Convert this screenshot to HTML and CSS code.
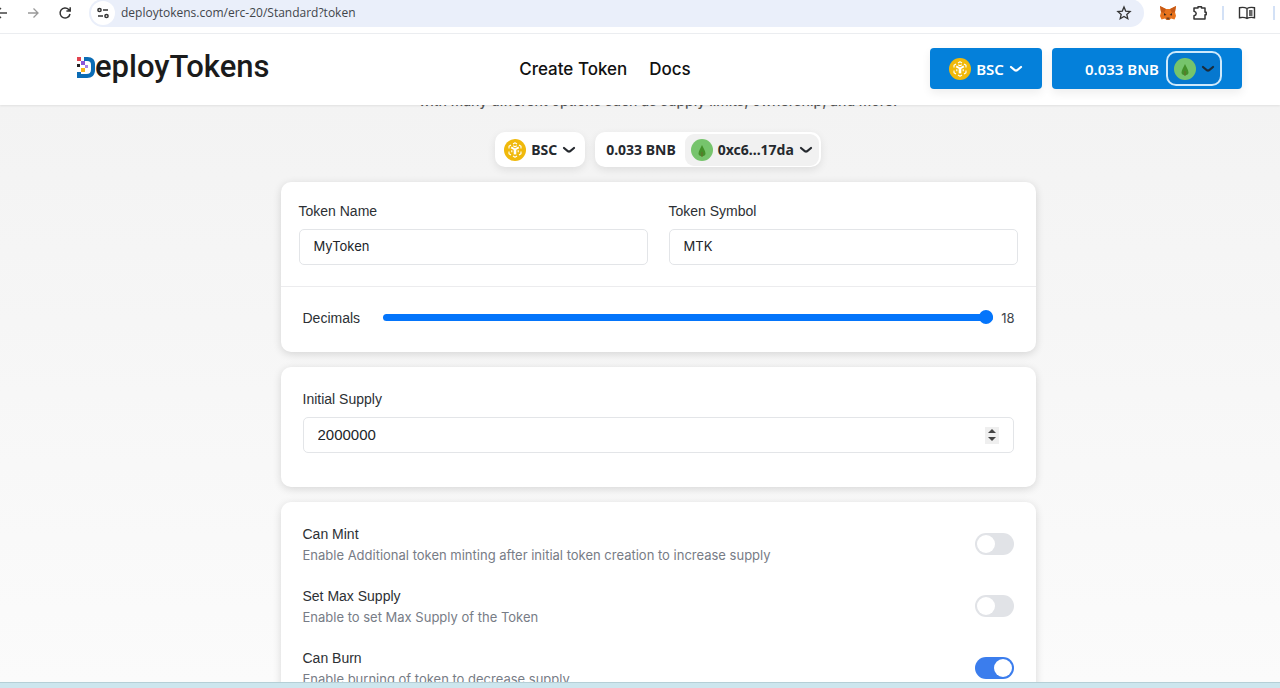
FILE: index.html
```html
<!DOCTYPE html>
<html lang="en">
<head>
<meta charset="utf-8">
<title>DeployTokens</title>
<link rel="stylesheet" href="styles.css">
</head>
<body>
<svg class="defs" aria-hidden="true">
  <symbol id="chevron" viewBox="0 0 14 8"><path d="M2 2l4 3.300q1 .6 2 0L12 2" fill="none" stroke="currentColor" stroke-width="2.200" stroke-linecap="round"/></symbol>
  <symbol id="bnb" viewBox="0 0 22 22">
    <circle cx="11" cy="11" r="11" fill="#f0b90b"/>
    <g fill="none" stroke="#fff" stroke-width="1.100" stroke-linejoin="round">
      <path d="M9 4.900 11 3.800l2 1.100M15 6l2 1.200v2.200M17 12.600v2.200L15 16M13 17.100 11 18.200 9 17.100M7 16l-2-1.200v-2.200M5 9.400V7.200L7 6"/>
      <path d="M7.200 8.300 11 10.500l3.800-2.200" stroke-width="2"/><path d="M11 10.400v5" stroke-width="2.600"/><path d="M7.800 13.200v-2M14.200 13.200v-2M9.200 6.700l1.800 1 1.800-1"/>
    </g>
  </symbol>
  <symbol id="avatar" viewBox="0 0 22 22"><circle cx="11" cy="11" r="11" fill="#76c46c"/><path d="M11 6c1 2.500 3.500 6 3.500 8.500 0 1.800-1.500 2.700-3.500 2.700s-3.500-.9-3.500-2.700C7.500 12 10 8.500 11 6z" fill="#43902a"/><path d="M11 13v5" stroke="#6a6a2c" stroke-width="1"/></symbol>
</svg>

<div class="browser">
  <button class="tool back" aria-label="Back"><svg width="16" height="16" viewBox="0 0 16 16"><path d="M14 8H3M8 3 3 8l5 5" fill="none" stroke="#444" stroke-width="1.400"/></svg></button>
  <button class="tool" aria-label="Forward"><svg width="16" height="16" viewBox="0 0 16 16"><path d="M3 8h10M8.500 3.500 13 8l-4.500 4.500" fill="none" stroke="#999" stroke-width="1.300"/></svg></button>
  <button class="tool" aria-label="Reload"><svg width="16" height="16" viewBox="0 0 16 16"><path d="M13 9a5 5 0 1 1-1.300-4.500L13 5.800M13.200 2.300v3.800H9.400" fill="none" stroke="#333" stroke-width="1.500"/></svg></button>
  <div class="address">
    <button class="site" aria-label="Site information"><svg width="14" height="14" viewBox="0 0 14 14" fill="none" stroke="#333" stroke-width="1.500"><circle cx="3.500" cy="4" r="1.600"/><path d="M7 4h5M2 10h5"/><circle cx="10.500" cy="10" r="1.600"/></svg></button>
    <input class="url" aria-label="Address" value="deploytokens.com/erc-20/Standard?token">
    <button class="tool" aria-label="Bookmark"><svg width="16" height="16" viewBox="0 0 16 16"><path d="m8 2 1.700 4.100 4.400.4-3.300 2.900 1 4.300L8 11.400l-3.800 2.300 1-4.300-3.300-2.900 4.400-.4z" fill="none" stroke="#333" stroke-width="1.300"/></svg></button>
  </div>
  <button class="tool" aria-label="MetaMask"><svg width="18" height="16" viewBox="0 0 18 16"><path d="m1 1 6 3h4l6-3-1 6 1 4-1.500 3.500L12 13.500 10.500 15h-3L6 13.500l-3.500 1L1 11l1-4z" fill="#e8731c"/><path d="m1 1 6 3-2 4-3-1zM17 1l-6 3 2 4 3-1z" fill="#c85a16"/><path d="m5 8 2.500 2L5 10.500zM13 8l-2.500 2 2.500.5z" fill="#352920"/><path d="M7.500 12.500h3v2h-3z" fill="#75401f"/></svg></button>
  <button class="tool" aria-label="Extensions"><svg width="18" height="18" viewBox="0 0 18 18"><path d="M3 4h4V2.800h3.500V4H14v4.200h1.200v2.600H14V15H3v-3.200q2.200-.6 2.200-2.300T3 7.200z" fill="none" stroke="#333" stroke-width="1.500" stroke-linejoin="round"/></svg></button>
  <span class="rule"></span>
  <button class="tool book" aria-label="Reading list"><svg width="18" height="14" viewBox="0 0 18 14"><path d="M9 2.500C7 1.300 4 1.200 1.500 1.700v10c2.500-.5 5.500-.4 7.500.8 2-1.200 5-1.300 7.500-.8v-10C14 1.200 11 1.300 9 2.500zM9 2.500v10M11 5h3.500M11 7h3.500M11 9h3.500" fill="none" stroke="#333" stroke-width="1.400"/></svg></button>
  <span class="rule last"></span>
</div>

<header class="header">
  <a class="logo" href="#" aria-label="DeployTokens"><svg class="mark" width="18" height="22" viewBox="0 0 18 22"><path d="M7 1h3.500c5 0 7.500 3 7.500 7v6c0 5-3 8-8 8H0v-6h4v2h5.500c3 0 4.500-1.500 4.500-4.500V9c0-2.500-1-4-4-4H7z" fill="#0b6cb5"/><path d="M0 1h4v4H0z" fill="#e2434f"/><path d="M4 5h4v4H4z" fill="#8b55d8"/><path d="M0 8h3v3H0z" fill="#222"/><path d="M4 12h4v4H4z" fill="#f4b41d"/><path d="M8 9h3v3H8z" fill="#a985e6"/></svg><span>eployTokens</span></a>
  <nav class="nav"><a href="#">Create Token</a><a href="#">Docs</a></nav>
  <div class="wallet">
    <button class="blue chain"><svg class="coin"><use href="#bnb"/></svg>BSC<svg class="chev"><use href="#chevron"/></svg></button>
    <button class="blue account">0.033 BNB<span class="ring"><svg class="coin"><use href="#avatar"/></svg><svg class="chev dark"><use href="#chevron"/></svg></span></button>
  </div>
</header>

<main class="main">
  <p class="intro">with many different options such as supply limits, ownership, and more.</p>
  <div class="chips">
    <button class="chip"><svg class="coin"><use href="#bnb"/></svg>BSC<svg class="chev"><use href="#chevron"/></svg></button>
    <button class="chip balance">0.033 BNB<span class="addr"><svg class="coin"><use href="#avatar"/></svg>0xc6...17da<svg class="chev"><use href="#chevron"/></svg></span></button>
  </div>
  <form class="form">
    <section class="card">
      <div class="pair">
        <div class="field"><label for="name">Token Name</label><input id="name" type="text" value="MyToken"></div>
        <div class="field"><label for="symbol">Token Symbol</label><input id="symbol" type="text" value="MTK"></div>
      </div>
      <div class="decimals"><label for="decimals">Decimals</label><input id="decimals" type="range" min="0" max="18" value="18"><output for="decimals">18</output></div>
    </section>
    <section class="card supply">
      <div class="field"><label for="supply">Initial Supply</label><div class="number"><input id="supply" type="text" inputmode="numeric" value="2000000"><button type="button" class="spin" aria-label="Change amount"><svg width="8" height="12" viewBox="0 0 8 12"><path d="m4 0 4 4H0zM0 8h8l-4 4z" fill="#444"/></svg></button></div></div>
    </section>
    <section class="card options">
      <div class="option"><div><label for="mint">Can Mint</label><p>Enable Additional token minting after initial token creation to increase supply</p></div><input id="mint" class="toggle" type="checkbox"></div>
      <div class="option"><div><label for="max">Set Max Supply</label><p>Enable to set Max Supply of the Token</p></div><input id="max" class="toggle" type="checkbox"></div>
      <div class="option"><div><label for="burn">Can Burn</label><p>Enable burning of token to decrease supply</p></div><input id="burn" class="toggle" type="checkbox" checked></div>
    </section>
  </form>
</main>
<footer class="taskbar"></footer>
</body>
</html>
```
FILE: styles.css
```css
* { box-sizing: border-box; }
body { margin: 0; height: 100vh; display: flex; flex-direction: column; overflow: hidden; font-family: Inter, sans-serif; color: #212529; background: #fff; }
button { border: 0; padding: 0; background: none; font: inherit; color: inherit; cursor: pointer; }
a { color: inherit; text-decoration: none; }
p { margin: 0; }
svg { display: block; flex: none; }
.defs { position: absolute; width: 0; height: 0; }

.browser { flex: none; height: 34px; padding-bottom: 8px; display: flex; align-items: center; border-bottom: 1px solid #eceef1; overflow: hidden; }
.tool { width: 32px; display: flex; justify-content: center; flex: none; }
.back { width: 18px; margin-left: -8px; }
.back + .tool { margin-left: 7px; }
.address { flex: 1; height: 28px; margin: 0 8px; padding: 0 4px 0 2px; display: flex; align-items: center; background: #eaeffa; border-radius: 14px; }
.site { width: 24px; height: 24px; border-radius: 50%; background: #fff; display: flex; align-items: center; justify-content: center; flex: none; }
.url { flex: 1; border: 0; background: none; outline: 0; padding: 0 6px; font: 12px "Open Sans", sans-serif; color: #41454b; }
.rule { width: 2px; height: 14px; background: #d3e1f6; margin-left: 6px; flex: none; }
.book { margin-left: 7px; }
.rule.last { margin: 0 5px 0 10px; }

.header { position: relative; z-index: 1; flex: none; height: 71px; padding: 0 38px 2px 77px; display: flex; align-items: center; justify-content: space-between; background: #fff; box-shadow: 0 1px 2px rgba(0, 0, 0, .08); }
.logo { display: flex; align-items: center; width: 203px; padding-bottom: 4px; font: 500 31px/36px Roboto, sans-serif; color: #1b1b1b; }
.nav { display: flex; gap: 22px; font-size: 17px; font-weight: 500; color: #111; }
.wallet { display: flex; gap: 10px; }
.blue { height: 41px; display: flex; align-items: center; border-radius: 4px; background: #0480da; color: #fff; font: 600 15px "Noto Sans", sans-serif; box-shadow: 0 4px 10px rgba(0, 0, 0, .07); }
.coin { width: 22px; height: 22px; }
.chev { width: 14px; height: 8px; }
.chain { width: 112px; justify-content: center; gap: 5px; }
.account { width: 190px; padding-right: 20px; justify-content: flex-end; gap: 7px; }
.ring { height: 35px; width: 56px; display: flex; align-items: center; justify-content: center; gap: 5px; border: 2px solid #cfe9fb; border-radius: 10px; background: #0678cf; }
.dark { color: #1b2b3a; }

.main { flex: 1; min-height: 0; overflow: hidden; padding-left: 36px; display: flex; flex-direction: column; align-items: center; background: linear-gradient(#f3f3f3, #fbfbfb); }
.intro { flex: none; height: 24px; line-height: 24px; margin-top: -16px; font-size: 14px; font-weight: 500; color: #555; }
.chips { flex: none; display: flex; gap: 10px; margin-top: 19px; }
.chip { height: 35px; padding: 0 9px; display: flex; align-items: center; gap: 5px; border-radius: 10px; background: #fff; font: 700 14px "Noto Sans", sans-serif; color: #25292e; box-shadow: 0 3px 8px rgba(0, 0, 0, .09); }
.balance { padding: 0 2px 0 11px; gap: 9px; }
.addr { height: 32px; padding: 0 6px; display: flex; align-items: center; gap: 5px; border-radius: 9px; background: #f1f1f1; }

.form { flex: none; width: calc(100% - 80px); max-width: 755px; margin-top: 15px; display: flex; flex-direction: column; gap: 15px; font-size: 14px; }
.card { background: #fff; border-radius: 10px; box-shadow: 0 2px 8px rgba(0, 0, 0, .14); }
.card label { font: 14px/20px "Liberation Sans", Arial, sans-serif; color: #2c3034; }
.pair { padding: 19px 18px 21px; display: grid; grid-template-columns: 1fr 1fr; gap: 21px; border-bottom: 1px solid #ececee; }
.field { display: flex; flex-direction: column; gap: 8px; }
.field input { width: 100%; height: 36px; padding: 0 14px 2px; border: 1px solid #e3e5e8; border-radius: 5px; background: #fff; font: 13px Inter, sans-serif; color: #212529; outline: 0; }
.decimals { height: 65px; padding: 0 21px 4px 22px; display: flex; align-items: center; }
.decimals input { flex: 1; height: 14px; margin: 0 8px 0 23px; appearance: none; background: none; }
.decimals input::-webkit-slider-runnable-track { height: 7px; border-radius: 4px; background: #0475fb; }
.decimals input::-webkit-slider-thumb { appearance: none; width: 14px; height: 14px; margin-top: -4px; border-radius: 50%; background: #0475fb; }
.decimals output { font-size: 13px; color: #41454b; }
.supply { padding: 22px 22px 34px; }
.number { display: grid; align-items: center; }
.number > * { grid-area: 1 / 1; }
.number input { font: 15px "Liberation Sans", Arial, sans-serif; }
.spin { justify-self: end; margin-right: 15px; width: 14px; height: 17px; display: flex; align-items: center; justify-content: center; background: #efefef; }
.options { padding: 22px; display: flex; flex-direction: column; gap: 20px; }
.option { display: flex; justify-content: space-between; align-items: center; }
.option label { display: block; line-height: 20px; }
.option p { font-size: 13px; line-height: 22px; color: #777c86; }
.toggle { appearance: none; width: 39px; height: 22px; margin: 0 0 2px; padding: 2px; display: flex; border-radius: 11px; background: #e1e3e7; }
.toggle::before { content: ""; width: 18px; height: 18px; border-radius: 50%; background: #fff; }
.toggle:checked { background: #3b7ded; justify-content: flex-end; }
.taskbar { flex: none; height: 6px; background: #cde6ee; border-top: 1px solid #b5cfd6; }
```
